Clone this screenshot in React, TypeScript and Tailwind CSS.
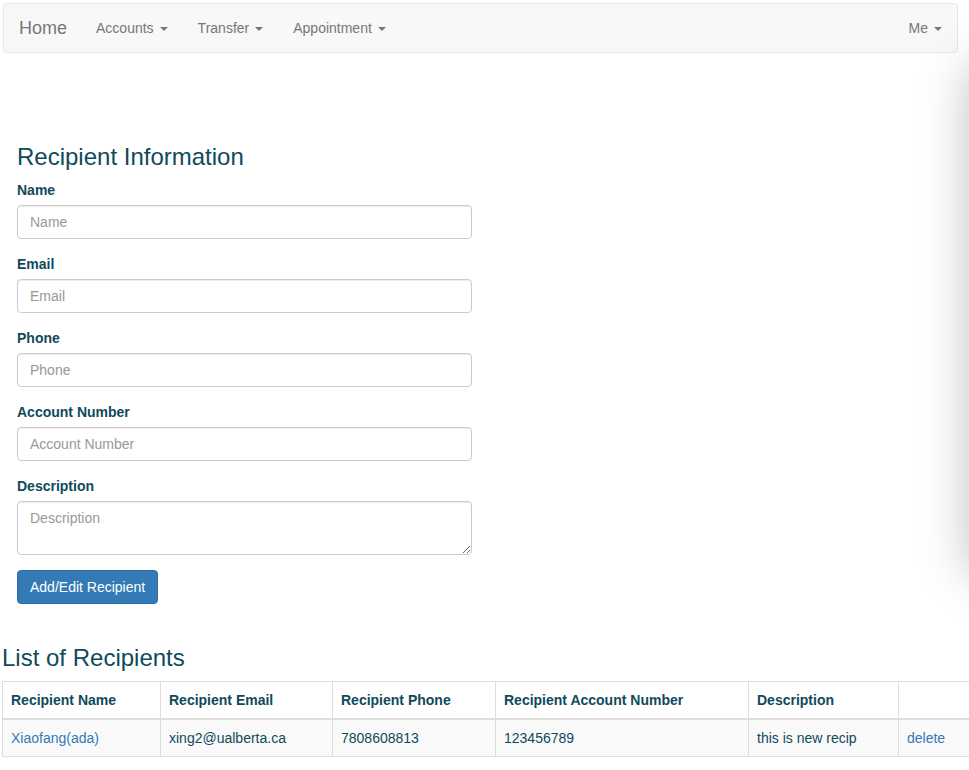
const Caret = () => (
    <span className="ml-[6px] inline-block h-0 w-0 border-x-[4px] border-t-[4px] border-x-transparent border-t-[#777] align-middle"/>
)

const Field = ({label, area}: {label: string, area?: boolean}) => (
    <div className="mb-[15px]">
        <label className="mb-[5px] block text-[14px] font-bold leading-[20px]">{label}</label>
        {area ? (
            <textarea placeholder={label} className="block h-[54px] w-full resize-y rounded-[4px] border border-[#ccc] px-[12px] py-[6px] text-[14px] leading-[20px] text-[#555] shadow-[inset_0_1px_1px_rgba(0,0,0,0.075)] placeholder:text-[#999]"/>
        ) : (
            <input placeholder={label} className="block h-[34px] w-full rounded-[4px] border border-[#ccc] px-[12px] py-[6px] text-[14px] leading-[20px] text-[#555] shadow-[inset_0_1px_1px_rgba(0,0,0,0.075)] placeholder:text-[#999]"/>
        )}
    </div>
)

const cols = [
    {title: "Recipient Name", w: "w-[158px]"},
    {title: "Recipient Email", w: "w-[172px]"},
    {title: "Recipient Phone", w: "w-[163px]"},
    {title: "Recipient Account Number", w: "w-[253px]"},
    {title: "Description", w: "w-[150px]"},
    {title: "", w: "w-[100px]"},
]

export default function App() {
    return (
        <div className="relative h-[770px] w-[969px] overflow-hidden bg-white text-[#0f4a5b]" style={{fontFamily: '"Liberation Sans", Arial, sans-serif'}}>
            <nav className="ml-[3px] mt-[3px] flex h-[50px] w-[955px] items-center rounded-[4px] border border-[#e7e7e7] bg-[#f8f8f8] text-[#777]">
                <span className="pl-[15px] pr-[14px] text-[18px] leading-[20px]">Home</span>
                <span className="px-[15px] text-[14px]">Accounts<Caret/></span>
                <span className="px-[15px] text-[14px]">Transfer<Caret/></span>
                <span className="px-[15px] text-[14px]">Appointment<Caret/></span>
                <span className="ml-auto px-[15px] text-[14px]">Me<Caret/></span>
            </nav>

            <div className="ml-[17px] w-[455px] pt-[91px]">
                <h3 className="mb-[10px] text-[24px] leading-[26px]">Recipient Information</h3>
                <Field label="Name"/>
                <Field label="Email"/>
                <Field label="Phone"/>
                <Field label="Account Number"/>
                <Field label="Description" area/>
                <button className="h-[34px] rounded-[4px] border border-[#2e6da4] bg-[#337ab7] px-[12px] text-[14px] text-white">Add/Edit Recipient</button>
            </div>

            <h3 className="ml-[2px] mt-[41px] mb-[10px] text-[24px] leading-[26px]">List of Recipients</h3>
            <table className="ml-[2px] w-[996px] table-fixed border-collapse text-[14px] leading-[20px]">
                <thead>
                    <tr>
                        {cols.map((c) => (
                            <th key={c.title} className={`${c.w} border border-b-2 border-[#ddd] p-[8px] text-left font-bold`}>{c.title}</th>
                        ))}
                    </tr>
                </thead>
                <tbody>
                    <tr className="bg-[#f9f9f9]">
                        <td className="border border-[#ddd] p-[8px] text-[#337ab7]">Xiaofang(ada)</td>
                        <td className="border border-[#ddd] p-[8px]">xing2@ualberta.ca</td>
                        <td className="border border-[#ddd] p-[8px]">7808608813</td>
                        <td className="border border-[#ddd] p-[8px]">123456789</td>
                        <td className="border border-[#ddd] p-[8px]">this is new recip</td>
                        <td className="border border-[#ddd] p-[8px] text-[#337ab7]">delete</td>
                    </tr>
                </tbody>
            </table>

            <div className="pointer-events-none absolute right-[-55px] top-[60px] h-[520px] w-[55px] rounded-full bg-black/25 blur-xl"/>
        </div>
    )
}
